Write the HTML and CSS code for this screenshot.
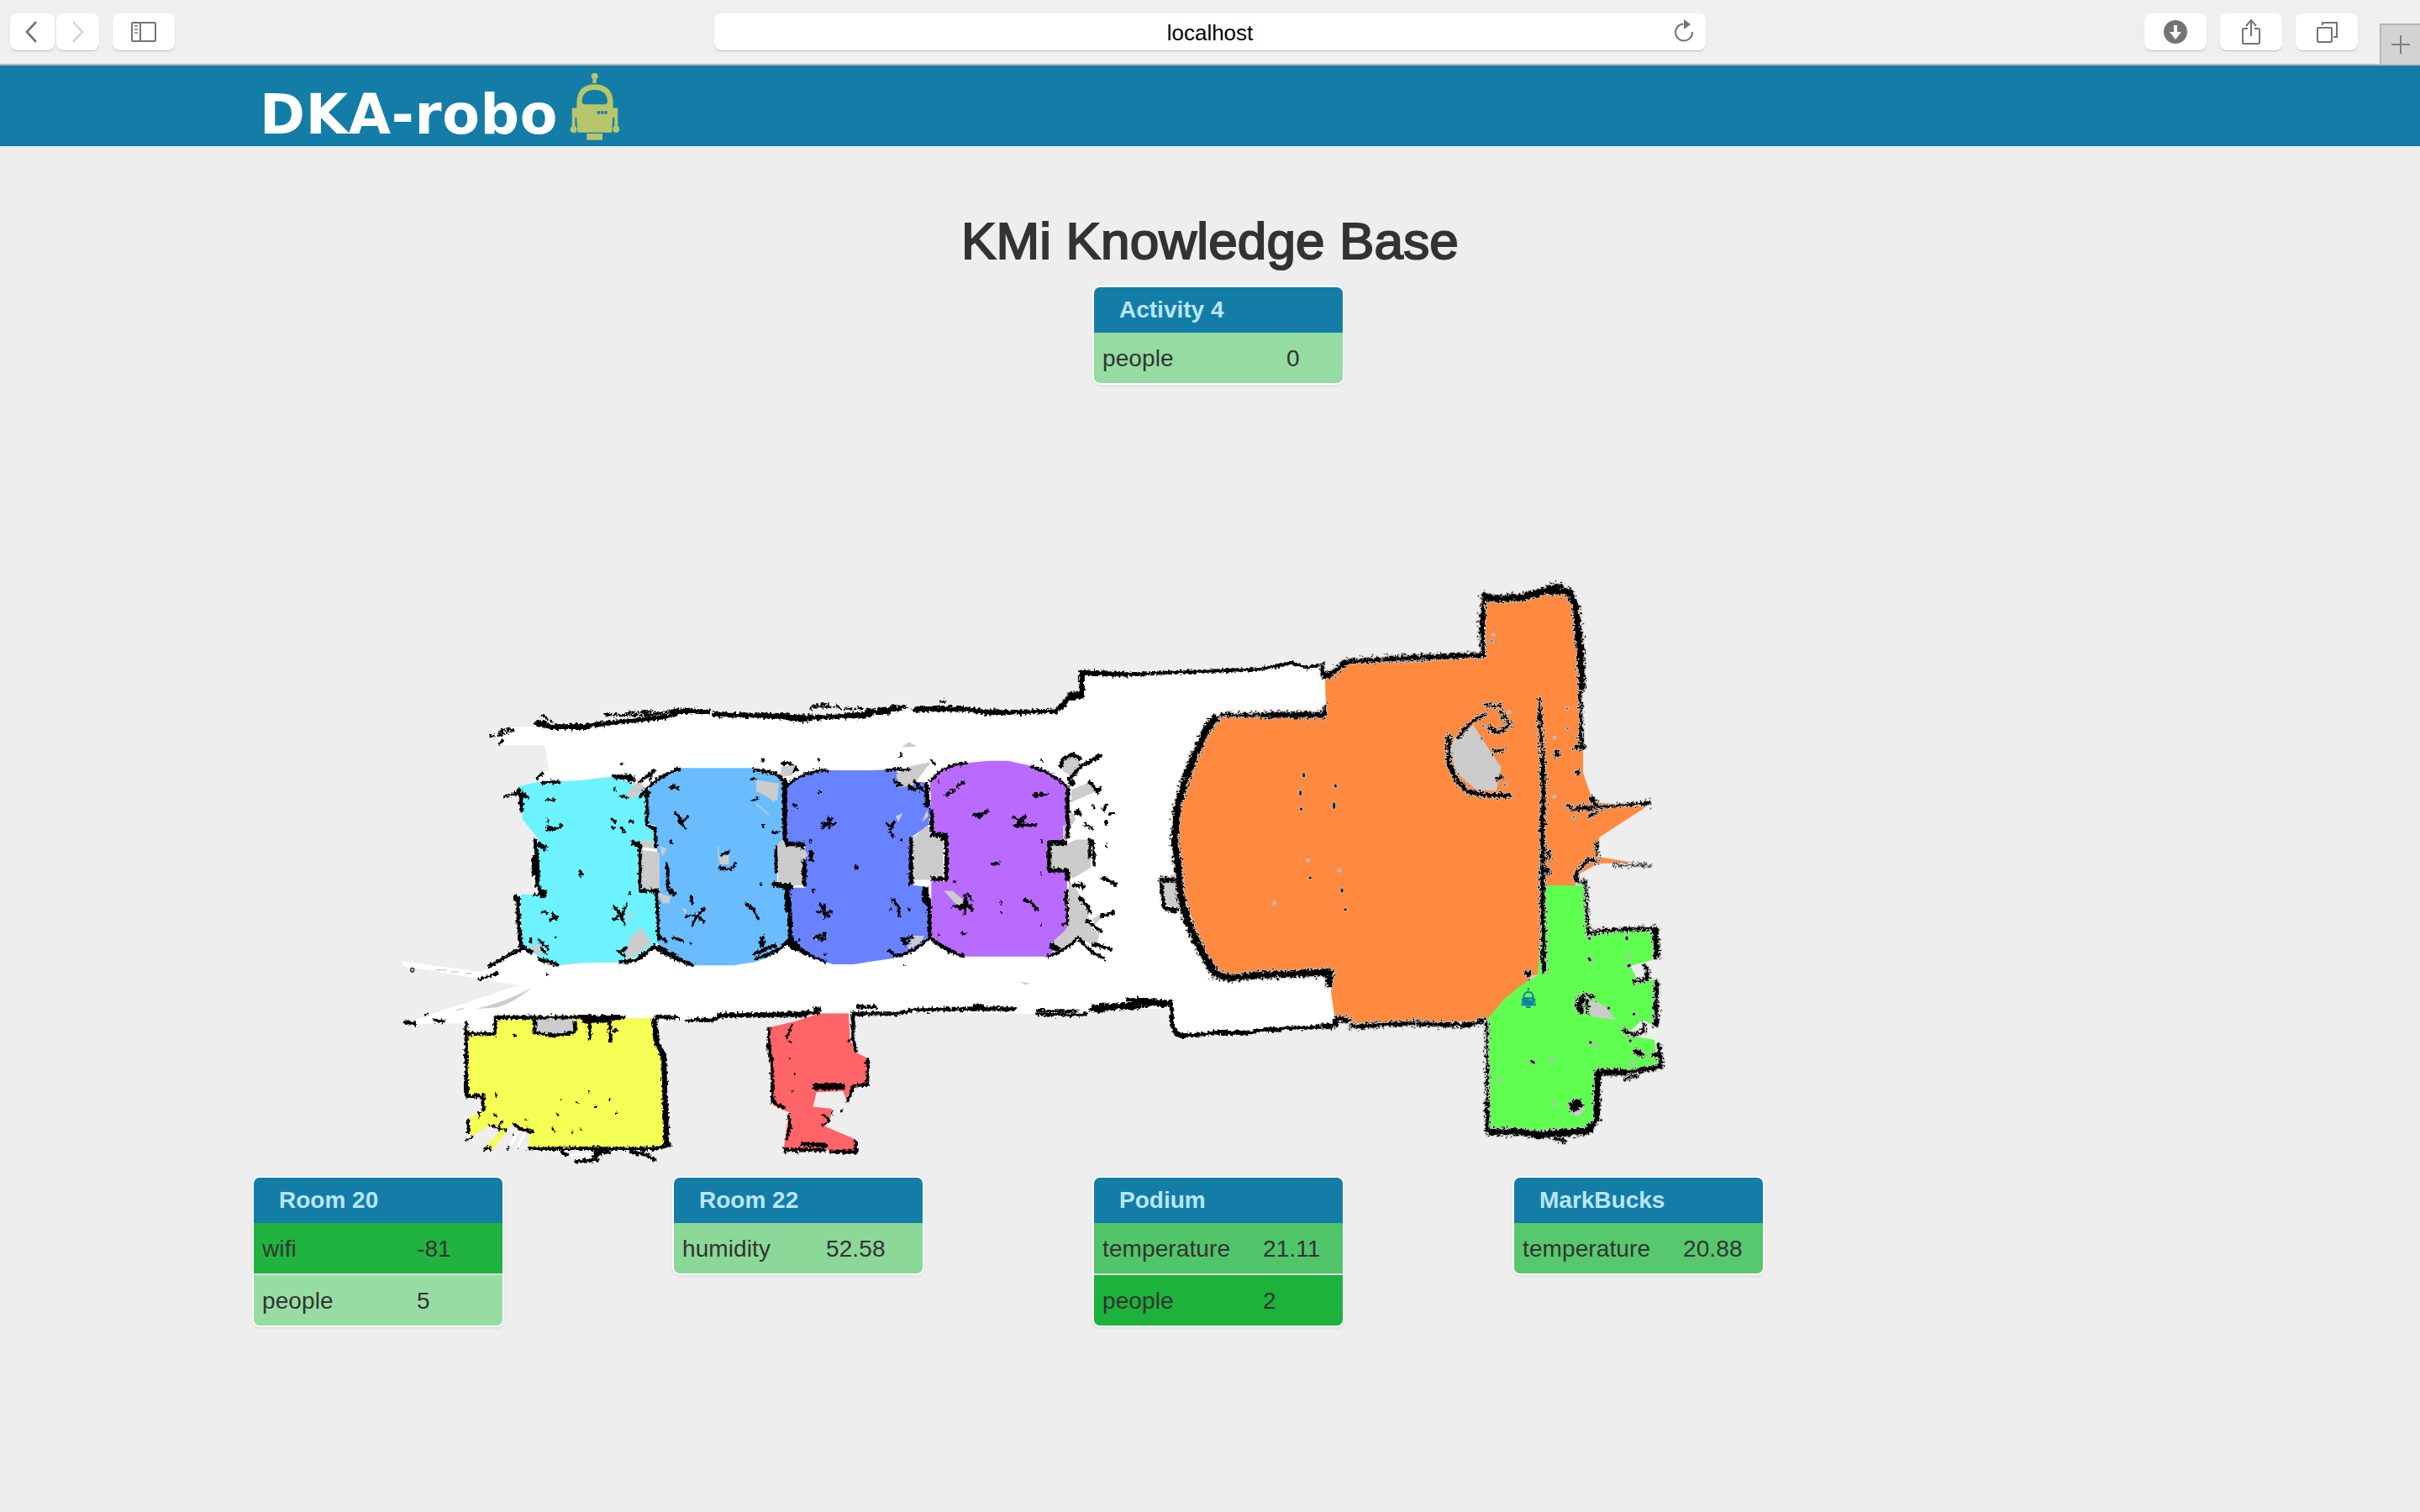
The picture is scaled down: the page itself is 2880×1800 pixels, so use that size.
FILE: index.html
```html
<!DOCTYPE html>
<html lang="en">
<head>
<meta charset="utf-8">
<title>DKA-robo</title>
<link rel="stylesheet" href="styles.css">
</head>
<body>
<svg class="defs" aria-hidden="true">
  <symbol id="robot" viewBox="53 50 180 241">
    <path fill="currentColor" d="M130 63a12 12 0 1 1 18 9v14h-13v-14q-5-4-5-9zM78 175V154Q80 92 142 90Q206 92 208 154V175H225V240A12 13 0 1 1 213 240V209H207L204 263H81L77 209H72V240A12 13 0 1 1 61 240V175zM96 151Q97 162 108 162H177Q188 162 188 151Q186 110 142 110Q99 110 96 151zM151 186V197H161V186zM164 186V197H174V186zM177 186V197H187V186z" fill-rule="evenodd"/>
    <path fill="currentColor" d="M114 267h56v23h-56z"/>
  </symbol>
</svg>

<header class="toolbar">
  <div class="nav-pair">
    <button class="btn back" aria-label="Back"><svg width="20" height="30" viewBox="0 0 20 30"><path class="ico ico-thick" d="M14 3L3 15l11 12"/></svg></button>
    <button class="btn forward" aria-label="Forward"><svg width="20" height="30" viewBox="0 0 20 30"><path class="ico ico-thick ico-off" d="M4 3l11 12L4 27"/></svg></button>
  </div>
  <button class="btn sidebar" aria-label="Sidebar"><svg width="30" height="24" viewBox="0 0 30 24"><rect class="ico" x="1" y="1" width="28" height="22" rx="1"/><path class="ico" d="M11 1v22"/><path class="ico ico-light" d="M4 5h4M4 9h4M4 13h4"/></svg></button>
  <div class="address">
    <span>localhost</span>
    <svg class="reload" width="26" height="30" viewBox="0 0 26 30"><path class="ico ico-reload" d="M12.500 6.500A10 10 0 1 0 23 16"/><path class="ico-head" d="M13 1l8 6-8 6z"/></svg>
  </div>
  <div class="tools">
    <button class="btn" aria-label="Downloads"><svg width="28" height="28" viewBox="0 0 28 28"><circle class="ico-fill" cx="14" cy="14" r="14"/><path fill="#fff" d="M12 6h4v8h5l-7 9-7-9h5z"/></svg></button>
    <button class="btn" aria-label="Share"><svg width="24" height="32" viewBox="0 0 24 32"><path class="ico" d="M8 12H3q-1 0-1 1v16q0 1 1 1h18q1 0 1-1V13q0-1-1-1h-5M12 21V3M6 9l6-7 6 7"/></svg></button>
    <button class="btn" aria-label="Tabs"><svg width="26" height="26" viewBox="0 0 26 26"><rect class="ico" x="2" y="8" width="17" height="17" rx="1"/><path class="ico" d="M8 5V2h17v17h-4"/></svg></button>
  </div>
  <button class="newtab" aria-label="New tab"><svg width="22" height="22" viewBox="0 0 22 22"><path class="ico-plus" d="M11 0v22M0 11h22"/></svg></button>
</header>

<nav class="navbar">
  <span class="brand">DKA-robo</span>
  <svg class="brand-robot"><use href="#robot"/></svg>
</nav>

<main>
  <h1>KMi Knowledge Base</h1>
  <section class="cards cards-top">
    <article class="card c-activity">
      <h2>Activity 4</h2>
      <dl class="light"><dt>people</dt><dd>0</dd></dl>
    </article>
  </section>

  <svg class="map" viewBox="460 680 1560 722">
    <defs>
      <filter id="rough" x="-5%" y="-5%" width="110%" height="110%" color-interpolation-filters="sRGB">
        <feTurbulence type="fractalNoise" baseFrequency=".07" numOctaves="2" seed="4" result="n"/>
        <feDisplacementMap in="SourceGraphic" in2="n" scale="18" xChannelSelector="R" yChannelSelector="G" result="a"/>
        <feTurbulence type="fractalNoise" baseFrequency=".12" numOctaves="1" seed="9" result="m"/>
        <feDisplacementMap in="SourceGraphic" in2="m" scale="30" xChannelSelector="G" yChannelSelector="R" result="b"/>
        <feMerge><feMergeNode in="a"/><feMergeNode in="b"/></feMerge>
      </filter>
      <filter id="ragged" x="-5%" y="-5%" width="110%" height="110%" color-interpolation-filters="sRGB">
        <feTurbulence type="fractalNoise" baseFrequency=".06" numOctaves="2" seed="4" result="n"/>
        <feDisplacementMap in="SourceGraphic" in2="n" scale="26" xChannelSelector="R" yChannelSelector="G" result="a"/>
        <feTurbulence type="fractalNoise" baseFrequency=".13" numOctaves="2" seed="9" result="m"/>
        <feDisplacementMap in="SourceGraphic" in2="m" scale="46" xChannelSelector="G" yChannelSelector="R" result="b"/>
        <feMerge result="wall"><feMergeNode in="a"/><feMergeNode in="b"/></feMerge>
        <feMorphology in="wall" operator="dilate" radius="2.500" result="fat"/>
        <feFlood flood-color="#bbb" flood-opacity=".75"/>
        <feComposite in2="fat" operator="in" result="edge"/>
        <feMerge><feMergeNode in="edge"/><feMergeNode in="wall"/></feMerge>
      </filter>
      <filter id="speckle" x="-5%" y="-5%" width="110%" height="110%" color-interpolation-filters="sRGB">
        <feTurbulence type="fractalNoise" baseFrequency=".1" numOctaves="2" seed="2" result="n"/>
        <feDisplacementMap in="SourceGraphic" in2="n" scale="18" xChannelSelector="R" yChannelSelector="G"/>
      </filter>
    </defs>

    <!-- corridor floor -->
    <path fill="#fff" d="M583 875L612 866L660 864L713 862L793 853L813 846L880 848L953 855L1050 846L1167 848L1257 848L1277 827L1288 830L1287 802L1407 800L1473 798L1540 790L1573 795L1580 812L1582 850L1460 860L1410 970L1415 1060L1450 1160L1590 1160L1584 1183L1590 1222L1407 1233L1397 1227L1392 1200L1233 1207L1067 1205L1013 1205L900 1208L813 1214L777 1218L590 1218L557 1231L555 1218L493 1219L485 1217L617 1173L480 1150L478 1144L570 1157L582 1153L623 1131L650 1120L650 935L637 929L653 916L648 887L597 887L592 879Z"/>

    <!-- west wing -->
    <g transform="translate(460 820) scale(.33333 .3699)">
      <path fill="#6df3ff" d="M470 315L540 300L690 295L800 283L870 300L930 335V440L960 445V650L975 810L930 850L850 880L690 883L620 890L555 870L510 840L480 820V660L540 665V480L485 420L480 350Z"/>
      <path fill="#69bdff" d="M930 330Q960 280 1050 255H1310Q1385 270 1425 300V490L1395 510V625L1435 640L1445 800Q1400 860 1310 880L1240 890H1095Q1000 860 965 815L975 700L960 440L930 435Z"/>
      <path fill="#f4fe54" d="M388 1060H850L955 1060L965 1150L990 1180L1000 1475H505L512 1430L450 1400L380 1482L350 1478L410 1420L365 1405L310 1438L295 1435V1380L345 1355V1312H290V1110H388Z"/>
      <g fill="#ccc">
        <path d="M530 1062H672V1100Q600 1130 530 1105ZM905 490L950 485L960 520L975 530V650H910ZM870 325L905 290L920 320L880 355L855 345ZM870 800L910 768L945 820L870 870H850ZM1330 295L1400 305L1385 365L1330 330ZM1395 500L1425 480L1500 520V632H1400ZM1410 250L1455 250L1440 280L1405 285ZM970 655L1015 670L1010 690H985ZM975 505L1000 515L985 540ZM1185 540L1222 535V565H1190ZM855 735L875 715L882 725L860 747ZM500 835L545 822L570 850H515ZM1055 705L1070 710L1068 728Z"/>
        <path d="M320 1030Q420 1010 520 962Q440 1018 390 1026Z"/>
      </g>
      <path fill="none" stroke="#fff" stroke-width="9" d="M915 515L965 520M435 1480L480 1410M465 1480L495 1430M320 1090H370M655 1500H740"/>
      <path fill="none" stroke="#ccc" stroke-width="4" d="M175 905H215M230 911H258M282 916H305M250 1035L275 1028M1185 505V545M1320 370L1365 405"/>
      <g filter="url(#rough)" class="wall">
        <path stroke-width="12" d="M530 110L590 122L670 124L760 114L880 102L1000 90L1060 72L1155 74M1165 82L1420 90L1500 97"/>
        <path stroke-width="15" d="M535 110H570M600 122H720M1430 93L1500 98"/>
        <path stroke-width="6" stroke-dasharray="26 7 9 5 40 4" d="M780 84H950L1030 68H1100M860 76L960 74M960 80L1030 76M555 85L590 105M395 150L455 130M400 140L440 128M365 152H385M400 178L418 165"/>
        <path stroke-width="12" d="M475 325L485 395M530 485L540 570L538 630L565 668M470 670V735L480 825L520 850"/>
        <path stroke-width="9" d="M365 895L420 865L490 832M552 302L622 299M810 282L885 295M930 330V440L957 448L962 510M905 500V650H965L972 810M540 868L615 890M830 880L890 874L960 828L1030 865L1095 890"/>
        <path stroke-width="8" d="M905 350Q960 280 1050 257M1310 260L1385 272L1425 300V480L1440 500H1500M1392 505V590M1002 560L1005 650M1310 870Q1400 850 1445 805M1380 628L1440 640L1445 800L1500 855M1310 855L1390 825M1425 270L1465 262L1440 240H1410"/>
        <path stroke-width="14" d="M1430 640V720M1422 300V480M540 500L570 512M875 497L905 500M1010 650L1030 660M815 284H880M528 540V600M550 660H570M960 830L1040 868M1430 810L1500 852"/>
        <path stroke-width="9" d="M385 1058L850 1056M965 1056L1042 1058M1065 1066H1160L1200 1052L1500 1047M285 1075V1110H388V1062M285 1110V1310H345V1360M528 1060V1105Q600 1125 672 1105V1070M725 1070V1130M797 1070L800 1135M700 1070H800"/>
        <path stroke-width="17" d="M955 1060L965 1140L990 1180L994 1300L1000 1470"/>
        <path stroke-width="12" d="M700 1060H840M1180 1050H1500M285 1180V1210M285 1250V1305"/>
        <path stroke-width="9" d="M505 1480H960L1015 1468M292 1385V1430M450 1400L480 1418L525 1424M620 1490L650 1502M670 1522L760 1516M740 1490H800M735 1505L770 1495M870 1490L920 1500M915 1492L960 1518M350 1480H375M62 1073L105 1077M170 1066L205 1070"/>
      </g>
      <g filter="url(#speckle)" class="wall" stroke-width="9">
        <path d="M415 350L470 335L510 352M450 345L475 322M490 335L500 350M565 357H605M570 445L600 452L630 438M570 455L615 450M575 420V432M800 415L820 430M835 445L850 465M805 448H815M865 425L880 430M830 345L860 350M810 325H820M685 595H702M693 585V607M865 657H875M810 700L840 730L860 690M840 730L805 742M840 730L850 765M555 715L575 725M580 745L615 735M600 735L590 720M515 800V820M540 805L580 840M550 830L570 855M830 850L860 830M820 840L850 860M570 920H580M330 935L400 915M370 925L395 912M535 290L560 270M600 802H605M840 238V246M525 660L560 670M460 665V685"/>
        <path d="M1010 315L1045 320M1015 320L1030 308M1030 395L1055 430L1078 408M1040 425L1072 450M1055 445H1070M1010 490L1025 500M1195 535L1228 525M1185 572L1230 582L1250 560M1190 580H1235M1090 665V695M1065 732L1110 730L1135 705M1110 730L1090 760M1110 730L1135 752M1280 690L1310 710L1328 742M1290 708H1315M980 800L1000 812M1020 800L1060 812M1085 818H1090M1340 800V830M1335 820H1348M1300 360L1330 352M1300 290H1320M1375 460L1400 462M1340 228H1350M1340 440H1350M1332 630H1340M1450 372L1470 375M950 260L940 300M920 320L940 335M900 300L960 262"/>
        <path stroke-width="6" d="M450 1116H465M810 1100H828M391 1300V1312M330 1360V1385M385 1368L395 1375M365 1405L430 1420M410 1390L400 1420M722 1292V1302M618 1322H625M678 1332H685M744 1343H750M792 1322H799M606 1370H613M816 1365H823M590 1414L600 1424M660 1424H665M690 1419H697M490 1385L502 1392M280 1455L310 1440M450 1435H455M430 1480H438M465 1478H473M138 1050L148 1048"/>
      </g>
      <circle cx="92" cy="905" r="6" fill="none" stroke="#222" stroke-width="4"/>
    </g>

    <!-- central rooms -->
    <g transform="translate(900 820) scale(.33333 .3699)">
      <path fill="#6982ff" d="M110 315Q160 265 250 262H400L490 260L560 300L600 300L625 380L615 440L550 480V630L615 640L622 800Q550 860 470 870L395 880L345 887H275L250 880Q170 860 122 800L115 640H175V500H110Z"/>
      <path fill="#ba6bff" d="M620 300Q670 240 760 238L830 232H900L980 248Q1070 270 1110 315V495H1045V585H1110V780L1045 862H745Q680 850 625 800V620H675V475H630Z"/>
      <path fill="#ff6468" d="M45 1090L140 1070L225 1045H330L335 1130L355 1170L400 1190V1272L345 1285L320 1320L310 1295L215 1298L203 1345L270 1352L265 1380L245 1408L355 1450V1490H265L250 1480H98L110 1400L122 1365L60 1340L50 1200Z"/>
      <g fill="#ccc">
        <path d="M75 500L100 480L125 500H160L185 535L165 550V632H80ZM560 480L610 440L640 470H668V615H560ZM1048 500H1110L1140 485H1195V575L1130 610L1112 585H1048ZM500 275L545 250L625 235L560 310L505 318ZM0 295L80 305L75 360L0 330ZM95 250L140 245L125 280H90ZM1095 225L1130 215L1160 240L1125 280L1095 265ZM1125 325L1190 300L1215 330L1125 365ZM1120 380L1140 420L1120 450ZM1095 440L1115 440L1112 490H1095ZM1115 615L1140 640L1190 720L1180 750L1225 790L1215 830L1150 800L1090 840L1050 820L1100 780L1115 760ZM540 830L560 795H600L590 815L545 840ZM670 650L700 650L740 680V705L710 690ZM200 795L235 790L215 810ZM498 410L522 400L508 430ZM590 430L610 390L615 410ZM518 188L545 172L575 186ZM942 942L978 948L960 952ZM1200 740L1250 715L1210 760ZM1440 620H1490L1500 710L1455 690Z"/>
      </g>
      <g filter="url(#rough)" class="wall">
        <path stroke-width="12" d="M0 85L110 88L160 96L310 88L400 84L440 68L520 64"/>
        <path stroke-width="14" d="M110 92H200M315 86H390M390 74H480M580 64H740M800 76H900"/>
        <path stroke-width="12" d="M560 66L740 66L810 74L910 76L1070 72L1110 35L1165 18"/>
        <path stroke-width="5" stroke-dasharray="22 6 8 5" d="M190 65L215 50H260M205 58H290M285 55L300 65L390 62M655 42H675M480 56L540 60"/>
        <path stroke-width="12" d="M102 290V480L110 500H165V515M195 520V555M172 550V635M115 650L122 800M553 480V630M608 300L610 380M625 390L630 470H678V612H625M605 640L618 700L620 800M1112 315V480M1110 495H1045V585H1110L1112 620M1107 650V695"/>
        <path stroke-width="7" d="M110 315Q160 265 255 262M460 260H550M620 300Q670 240 755 240M980 250Q1060 270 1108 315M125 800Q170 860 250 878M470 840L500 860Q560 850 620 800Q680 850 745 860M1040 862Q1100 845 1150 800Q1190 850 1245 870M640 815Q670 830 710 848M1110 700V760M1190 545V485L1205 500V570"/>
        <path stroke-width="15" d="M105 810L150 840M60 628L130 638M1100 755V760M1050 825L1080 840M610 330V380M602 640V690M1120 305L1135 300M1115 20H1165M660 480H680"/>
        <path stroke-width="9" d="M0 1050L225 1042M230 1030H205M345 1040V1130L355 1170M340 1045L500 1046L560 1034L780 1030H930M360 1024H430M775 1020H810M45 1090V1160L55 1200L60 1330L100 1350M398 1190V1272L345 1280L325 1330M115 1370L120 1410L108 1450M98 1484H250M265 1490H355V1452M160 1464L255 1470"/>
        <path stroke-width="19" d="M205 1280H315M1200 1028L1330 1020L1380 1005L1475 1015"/>
        <path stroke-width="7" d="M1000 1036L1150 1038M1000 1046L1150 1050L1180 1044M1320 1000L1400 998M1330 1030L1400 1020M1190 1034L1240 1040"/>
        <path stroke-width="9" d="M1478 1000L1485 1080L1500 1115M1165 245L1235 212M1165 245L1115 295M1085 255L1095 225L1130 212L1160 225M1130 630L1170 635M1150 670L1185 700L1190 720M1180 745L1230 780M1200 820L1270 840M1440 615H1500M1445 620L1455 705L1500 715"/>
      </g>
      <g filter="url(#speckle)" class="wall" stroke-width="9">
        <path d="M230 435H285M258 410L262 455M235 450L275 415M460 432L485 445M495 425L475 460L495 478M515 487H522M350 575H364M357 568V582M212 718H272M243 690L245 740M228 690L260 735M485 675L510 705V735M540 711H550M475 711H480M205 800L245 790V805M215 805H250M240 853H250M198 648H208M520 810L560 795M515 800L535 825M530 825L550 810M500 300L525 315M490 290L510 315M545 320L585 322M560 295L600 330M545 312L570 328M625 230L640 245M512 222L520 208M220 230H228M222 332H228M190 490H200M130 370L145 380M150 808H156M20 230H28M10 820L25 800L22 830M0 850L70 825"/>
        <path stroke-width="10" d="M675 345L710 325M715 315L745 300M770 405H800L830 392M790 415L810 405M915 410L940 425L965 405M915 440H1000M930 435L960 425M990 340L1040 340M995 350L1020 335M840 565L868 560M1015 490H1025M700 700H770M745 660V730M755 660L770 680M725 710L755 680M750 690L775 715M870 688H876M870 720H876M955 680L980 685L1005 715M1015 598H1020M1015 760H1020M735 785L748 790M705 622H715M648 300H654M648 792H654M1015 230H1020"/>
        <path stroke-width="11" d="M1185 295L1215 325L1235 320M1215 330L1225 340M1145 385L1160 410M1135 400H1160M1170 435L1200 450M1200 380H1212M1250 370L1240 395M1260 400H1282M1250 425V440M1245 504H1252M1230 605L1290 632M1160 625L1170 645M1225 735L1280 718M1215 770L1235 780"/>
        <path stroke-width="6" d="M105 1130L130 1080M120 1135H125M115 1190H125M132 1240L140 1236M126 1295H132M235 1370L262 1388L235 1408M272 1375V1355M304 1352V1362M325 1132H340M350 1060V1090M528 890H534M140 1485L150 1498"/>
      </g>
    </g>

    <!-- podium -->
    <path fill="#ff8a3f" d="M1577 808L1608 788L1768 782V712L1862 707L1874 720L1884 890L1884 920L1896 955L1960 960L1903 997L1902 1020L1945 1027L1902 1028L1880 1040L1875 1054H1838V1158L1808 1175L1790 1190L1771 1214L1690 1219L1610 1218L1588 1208L1584 1180L1588 1156L1455 1160L1435 1138L1410 1070L1402 1000V960L1414 920L1450 852H1578Z"/>
    <path fill="#5fff50" d="M1837 1054H1886L1892 1109L1970 1104L1966 1143L1940 1150L1950 1168L1972 1166L1968 1221L1955 1214L1935 1232L1969 1238L1973 1270L1950 1276L1902 1276L1896 1346L1772 1349L1771 1212L1790 1190L1808 1175L1830 1160Z"/>
    <g transform="translate(1240 770) scale(.33333)">
      <path fill="#ccc" d="M445 845H480L490 935L450 920Z"/>
      <g filter="url(#rough)" class="wall">
        <path stroke-width="9" d="M310 98L500 90L640 86L780 80L890 58L950 75L1010 60"/>
        <path stroke-width="15" d="M135 92L310 99M95 176H148M142 95V178M65 222L95 185L115 178"/>
        <path stroke-width="9" d="M460 1265L468 1360L490 1385H570L620 1376L730 1380L800 1365L950 1360L1050 1352"/>
        <path stroke-width="14" d="M470 1370L490 1388H560M610 1378H730M790 1366H850"/>
        <path stroke-width="7" d="M425 840L435 930L460 942L490 935"/>
      </g>
      <g filter="url(#ragged)" class="wall">
        <path stroke-width="12" d="M1000 65L1005 105L1035 95L1090 52L1200 46L1380 40"/>
        <path stroke-width="7" d="M640 243H780M1010 245V210"/>
        <path stroke-width="15" d="M780 243L1010 243"/>
        <path stroke-width="20" d="M625 250L590 290L545 390L510 480L482 580L474 690L485 770L495 890L520 980L570 1090L620 1170L670 1182"/>
        <path stroke-width="18" d="M670 1182L790 1172L960 1165L1030 1162L1025 1215"/>
        <path stroke-width="11" d="M1000 1355L1050 1350V1325L1100 1335M1100 1357L1210 1350L1280 1345L1380 1342M420 832H475"/>
      </g>
      <g class="halo"><path d="M935 455v6M923 518v8M925 580h1M1048 495v3M1043 560v14M950 763h1M957 825h1M1062 799h1M1071 867v6M1083 938h1M830 915h1"/></g>
      <g class="dots"><path d="M935 455v6M923 518v8M925 580h1M1048 495v3M1043 560v14M957 825h1M1071 867v6M1083 938h1"/></g>
    </g>
    <g transform="translate(1660 680) scale(.33333)">
      <path fill="#ccc" d="M280 548L345 650L380 700L362 785L290 780L220 720L198 640L215 590L240 590Z"/>
      <g filter="url(#ragged)" class="wall">
        <path stroke-width="12" d="M-40 314L130 305L315 300L312 180L318 80"/>
        <path stroke-width="18" d="M318 88L360 98L460 92L540 70L620 72L645 120L658 260L670 420"/>
        <path stroke-width="10" d="M645 120L665 260L672 400M540 58L600 52"/>
        <path stroke-width="7" d="M662 430L665 560V635M645 630L680 628M515 455L520 560L527 670"/>
        <path stroke-width="12" d="M527 670L530 780V860L525 920L530 1070L555 1080"/>
        <path stroke-width="11" d="M192 585V680Q215 760 270 790Q330 805 410 800"/>
        <path stroke-width="6" d="M225 595Q260 540 320 512M320 480H380M378 500L402 540M335 560Q370 600 415 535M350 645L390 640M365 745L385 730M615 835L630 850L740 842L910 828M690 875L725 860M722 965V1018M725 1040L690 1030L650 1070L648 1110L680 1112L682 1140M550 1000L552 1030M527 1080V1140"/>
        <path stroke-width="11" d="M335 560L360 572M578 640V660M645 720H660M700 810L725 840M650 845H700M895 828H912"/>
        <path stroke-width="3" d="M780 1050H915"/>
      </g>
      <g class="halo"><path d="M345 250h1M352 227h1M614 491h1M616 561h1M570 594h1M569 805h1M638 878h1M310 597h1M408 503h1M392 763h1M315 553h1"/></g>
      <g class="dots dots-small"><path d="M345 250h1M614 491h1M616 561h1M638 878h1M310 597h1M392 763h1M315 553h1"/></g>
    </g>

    <!-- MarkBucks -->
    <g transform="translate(1720 1030) scale(.33333)">
      <path fill="#eee" d="M740 340L768 335V405L735 408L710 415L715 350ZM750 575L765 580V618L700 612L712 575L740 572Z"/>
      <path fill="#ccc" d="M515 485L545 488L575 510L608 552L520 540ZM445 880L490 850L498 875L470 898ZM300 395L335 390L305 410Z"/>
      <g filter="url(#ragged)" class="wall">
        <path stroke-width="11" d="M347 0L346 60L348 180L352 385M-100 568L80 570L140 555"/>
        <path stroke-width="5" d="M485 60H500L510 240M148 555L150 780L152 950"/>
        <path stroke-width="8" d="M510 240L600 232L750 225M148 840V950"/>
        <path stroke-width="17" d="M750 225L755 330M152 955L250 950L330 962L510 950L540 910L545 740H650"/>
        <path stroke-width="10" d="M320 968L440 962M545 760V870M650 740L770 720L762 640M755 410L752 575M710 355Q735 390 710 412"/>
        <path stroke-width="7" d="M710 412L670 415M635 585L655 602L705 600L710 565M740 685L765 670M390 975L430 988M640 765L690 750"/>
        <path stroke-width="14" d="M495 475L475 500L490 530M290 380L300 400M340 18H370"/>
        <path stroke-width="5" d="M470 480L500 460L535 475M505 480L510 530"/>
        <path stroke-width="32" stroke-linecap="round" d="M460 862L472 853"/>
        <path stroke-width="12" d="M675 664L708 678"/>
      </g>
      <g class="halo"><path d="M514 262h1M648 258v5M513 333l4 6M656 327h1M652 362l8-6M583 510h1M673 532h1M518 633h1M538 643h1M308 700l8 5M380 697h1M660 627h1M665 705h1M195 767h1M385 852h1"/></g>
      <g class="dots"><path d="M514 262h1M648 258v5M513 333l4 6M654 360l4-3M583 510h1M673 532h1M518 633h1M308 700l8 5M660 627h1"/></g>
    </g>
    <use class="map-robot" href="#robot" x="1810" y="1175" width="18" height="26"/>
  </svg>

  <section class="cards">
    <article class="card c-room20">
      <h2>Room 20</h2>
      <dl class="strong"><dt>wifi</dt><dd>-81</dd></dl>
      <dl class="light2"><dt>people</dt><dd>5</dd></dl>
    </article>
    <article class="card c-room22">
      <h2>Room 22</h2>
      <dl class="soft"><dt>humidity</dt><dd>52.58</dd></dl>
    </article>
    <article class="card c-temp">
      <h2>Podium</h2>
      <dl class="mid"><dt>temperature</dt><dd>21.11</dd></dl>
      <dl class="strong2"><dt>people</dt><dd>2</dd></dl>
    </article>
    <article class="card c-temp">
      <h2>MarkBucks</h2>
      <dl class="mid2"><dt>temperature</dt><dd>20.88</dd></dl>
    </article>
  </section>
</main>
</body>
</html>
```
FILE: styles.css
```css
* { box-sizing: border-box; }
body { margin: 0; background: #eee; color: #333; font-family: "Liberation Sans", Arial, sans-serif; font-size: 28px; min-height: 1800px; overflow: hidden; }
button { font: inherit; border: 0; padding: 0; }
svg { display: block; }
.defs { width: 0; height: 0; position: absolute; }

.toolbar { height: 78px; background: #efefef; border-bottom: 2px solid #b9b9b9; display: grid; grid-template-columns: 122px 716px 1180px 522px 280px 48px; padding-left: 12px; align-items: start; }
.btn { height: 44px; margin-top: 16px; width: 74px; background: #fff; border-radius: 8px; box-shadow: 0 1px 1px #bbb; display: flex; align-items: center; justify-content: center; }
.nav-pair { display: flex; gap: 2px; }
.back { width: 53px; }
.forward { width: 51px; }
.address { height: 44px; margin-top: 16px; padding-top: 2px; background: #fff; border-radius: 8px; box-shadow: 0 1px 1px #bbb; display: flex; align-items: center; justify-content: center; position: relative; color: #000; font-size: 26px; }
.reload { position: absolute; right: 13px; top: 6px; }
.tools { grid-column: 5; display: flex; gap: 16px; }
.newtab { grid-column: 6; height: 48px; margin-top: 28px; background: #d3d3d3; border: 2px solid #b5b5b5; border-width: 2px 0 0 2px; display: flex; align-items: center; justify-content: center; }
.ico { fill: none; stroke: #747474; stroke-width: 2; }
.ico-thick { stroke-width: 2.6; }
.ico-off { stroke: #d6d6d6; }
.ico-light { stroke: #999; }
.ico-fill, .ico-head { fill: #747474; }
.ico-plus { fill: none; stroke: #808080; stroke-width: 2; }

.navbar { height: 96px; background: #137da8; display: flex; padding-left: 309px; }
.brand { width: 369px; font: bold 65px/96px "DejaVu Sans", sans-serif; letter-spacing: .7px; color: #fff; padding-top: 11px; white-space: nowrap; }
.brand-robot { width: 60px; height: 80px; margin-top: 9px; color: #b7c66a; }

h1 { margin: 0; padding-top: 77px; height: 166px; font-size: 62px; line-height: 72px; font-weight: 400; letter-spacing: .15px; text-align: center; -webkit-text-stroke: 2px #333; white-space: nowrap; }
.cards { display: grid; grid-template-columns: repeat(4, 300px); column-gap: 200px; align-items: start; padding-left: 300px; }
.cards-top { height: 340px; }
.cards-top .card { grid-column: 3; }
.card { background: #ddd; border: 2px solid #fff; border-radius: 9px; overflow: hidden; box-shadow: 0 2px 3px rgba(0,0,0,.07); display: grid; row-gap: 2px; }
.card h2 { margin: 0 0 -2px; height: 54px; padding-left: 30px; background: #137da8; color: #b9e6f8; font-size: 28px; line-height: 54px; }
.card dl { margin: 0; height: 60px; line-height: 62px; display: flex; padding-left: 10px; letter-spacing: .1px; }
.card dt { width: var(--label); }
.card dd { margin: 0; }
.c-activity { --label: 219px; }
.c-room20 { --label: 184px; }
.c-room22 { --label: 171px; }
.c-temp { --label: 191px; }
.light { background: #94dca1; }
.light2 { background: #97dda3; }
.soft { background: #8bd899; }
.mid { background: #51c569; }
.mid2 { background: #57c86e; }
.strong { background: #21b33f; }
.strong2 { background: #1cb23b; }

.map { width: 1560px; height: 722px; margin-left: 460px; }
.map + .cards { margin-top: -2px; }
.wall { fill: none; stroke: #000; }
.halo { fill: none; stroke: #bbb; stroke-width: 15; stroke-linecap: round; }
.dots { fill: none; stroke: #222; stroke-width: 9; stroke-linecap: round; }
.dots-small { stroke: #666; stroke-width: 7; }
.map-robot { color: #137da8; }
```
